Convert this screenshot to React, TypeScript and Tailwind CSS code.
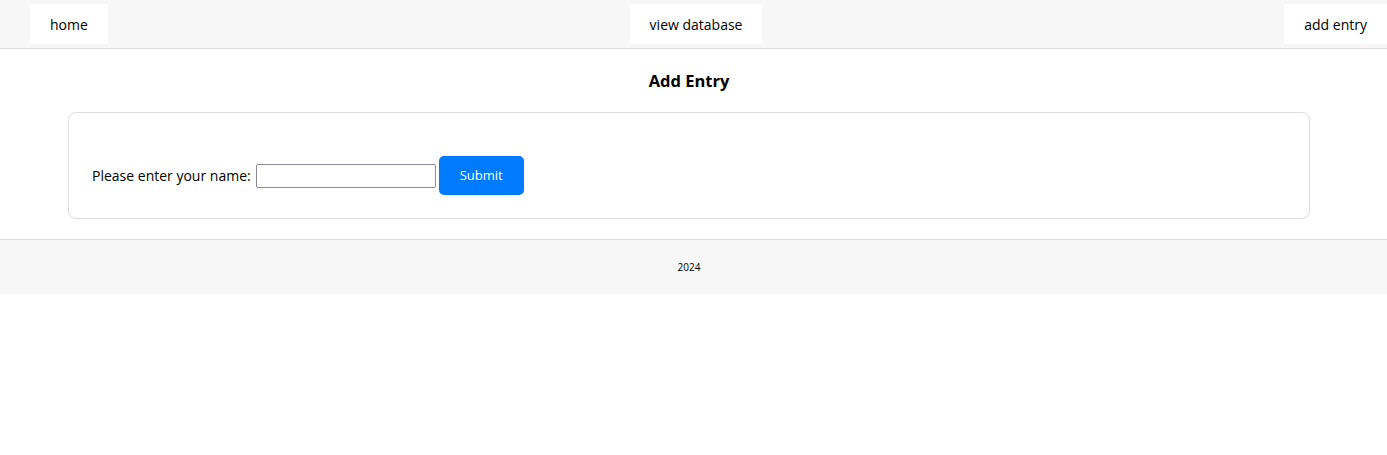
export default function App() {
  return (
    <div className="min-h-[455px] bg-white text-black font-['Open_Sans',sans-serif]">
      <header className="flex h-[49px] items-start justify-between border-b border-[#dedede] bg-[#f7f7f7] pl-[30px] pt-[4px]">
        <a className="flex h-[40px] items-center bg-white px-[20px] text-[14px]">home</a>
        <a className="flex h-[40px] items-center bg-white px-[20px] text-[14px]">view database</a>
        <a className="flex h-[40px] items-center bg-white px-[20px] text-[14px]">add entry</a>
      </header>

      <main className="pt-[20px] pb-[20px] pr-[9px]">
        <h2 className="h-[24px] text-center text-[16.5px] font-bold leading-[24px]">Add Entry</h2>
        <div className="mt-[19px] mx-[68px] rounded-[8px] border border-[#dddddd] px-[23px] pt-[43px] pb-[23px]">
          <form className="flex items-center">
            <label className="text-[14px]" htmlFor="name">
              Please enter your name:
            </label>
            <input
              id="name"
              type="text"
              className="ml-[5px] h-[24px] w-[180px] rounded-[2px] border border-[#8a8a9a] bg-white px-1 text-[13px] outline-none"
            />
            <button
              type="submit"
              className="ml-[3px] h-[39px] w-[85px] rounded-[5px] bg-[#007bff] pt-px text-[13px] text-white"
            >
              Submit
            </button>
          </form>
        </div>
      </main>

      <footer className="flex h-[55px] items-center justify-center border-t border-[#dedede] bg-[#f7f7f7] pr-[9px] text-[10px]">
        2024
      </footer>
    </div>
  );
}
